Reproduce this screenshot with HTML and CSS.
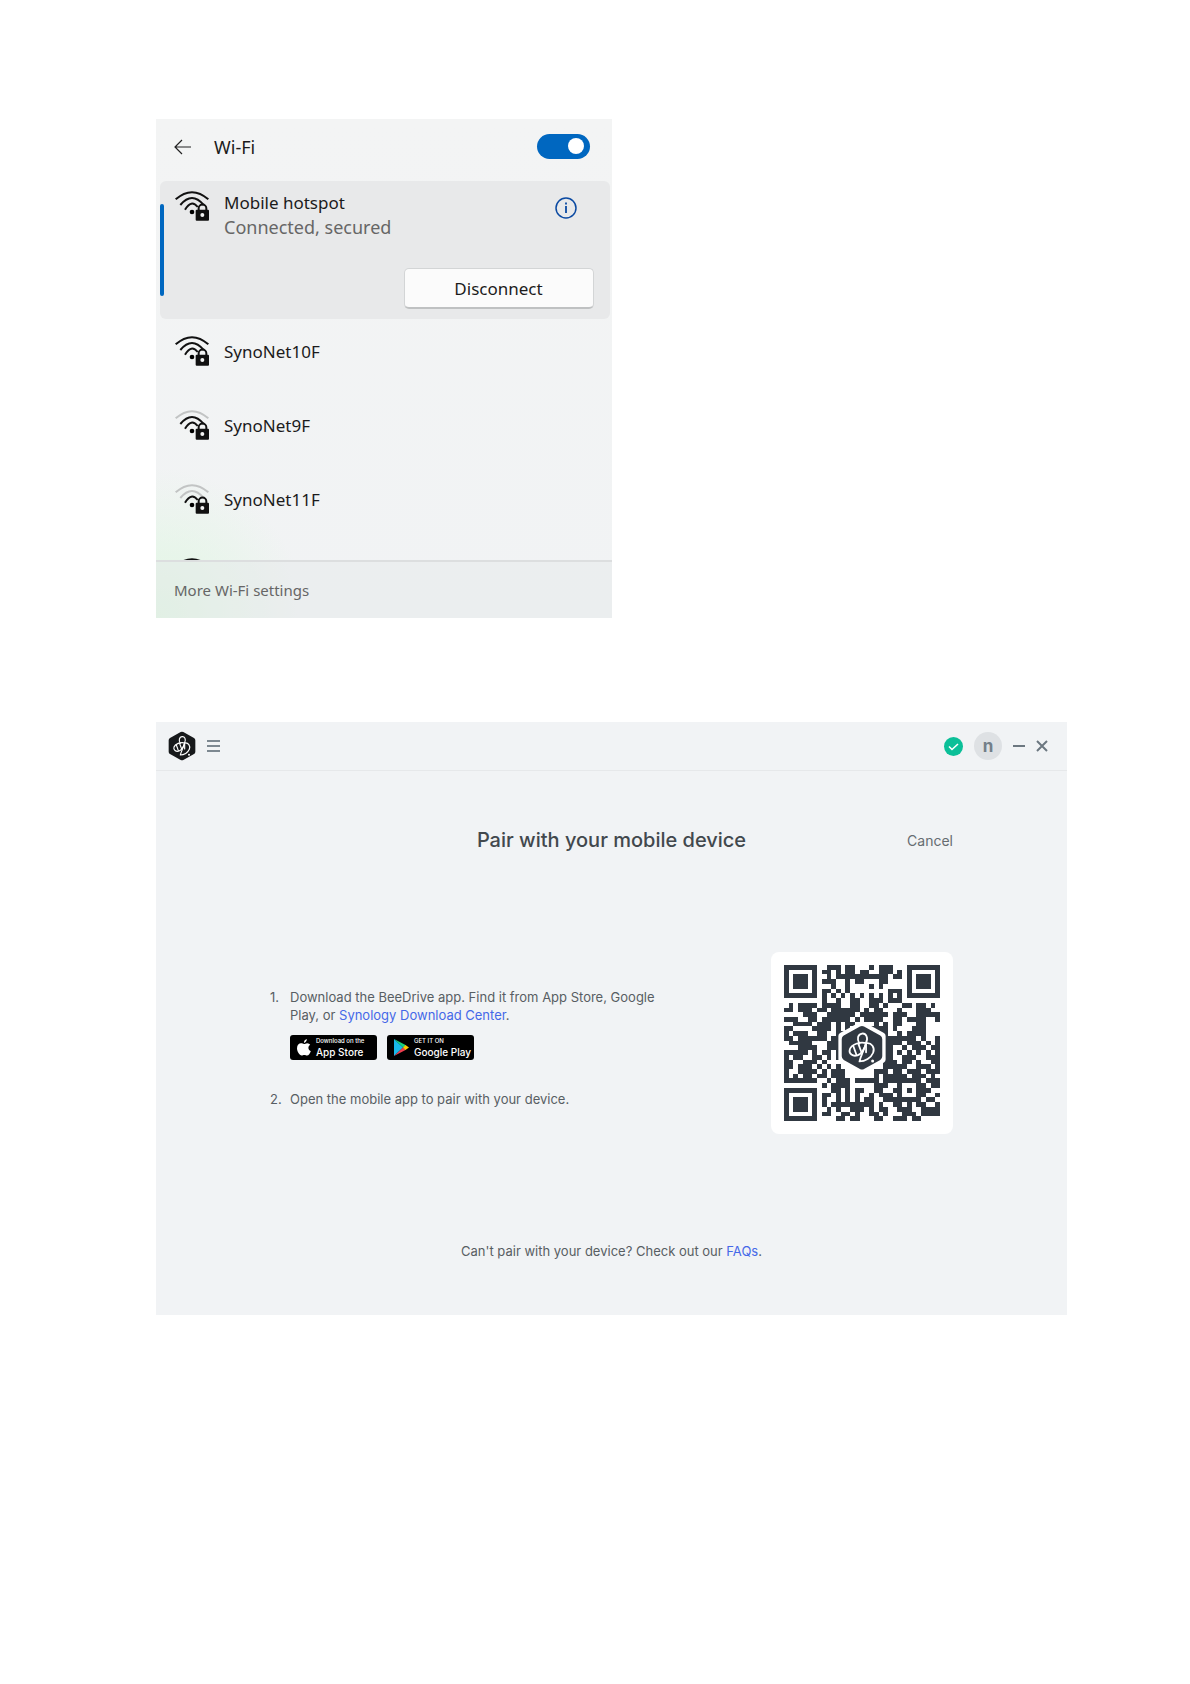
FILE: index.html
```
<!DOCTYPE html>
<html lang="en">
<head>
    <meta charset="UTF-8">
    <meta name="viewport" content="width=device-width, initial-scale=1.0">
    <title>Pair with your mobile device</title>
    <link rel="stylesheet" href="styles.css">
</head>
<body>
    <svg class="defs" aria-hidden="true">
        <symbol id="lock" viewBox="0 0 102 90">
            <path d="M71 58V52a11.500 11.500 0 0 1 23 0v6" fill="none" stroke="#111" stroke-width="6"/>
            <rect x="62" y="56" width="40" height="33" rx="3" fill="#111"/>
            <circle cx="82" cy="72" r="6" fill="#f3f4f4"/>
        </symbol>
        <symbol id="bee" viewBox="0 0 84 90">
            <path d="M38 3Q42 1 46 3L78 21Q82 23 82 28V62Q82 67 78 69L46 87Q42 89 38 87L6 69Q2 67 2 62V28Q2 23 6 21Z" fill="currentColor"/>
            <g fill="none" stroke="#fff" stroke-width="3.500" stroke-linecap="round" stroke-linejoin="round">
                <path d="M37 37C31 28 34 18 42 17S55 25 50 35V54"/>
                <path d="M50 36C38 32 21 39 18 48S24 63 33 60 46 50 50 36Z"/>
                <path d="M50 36C61 34 68 45 64 55S48 72 37 72C40 60 46 50 50 36Z"/>
                <path d="M25 42 31 59M35 38 41 54"/>
            </g>
            <circle cx="63" cy="71" r="3" fill="#fff"/>
        </symbol>
    </svg>

    <main class="page">
        <section class="wifi">
            <header class="wifi-header">
                <button class="icon-btn" aria-label="Back">
                    <svg width="17" height="16" viewBox="0 0 17 16"><path d="M17 8H1M8 1 1 8l7 7" fill="none" stroke="#222" stroke-width="1.200"/></svg>
                </button>
                <label for="wifi-toggle">Wi-Fi</label>
                <input type="checkbox" class="toggle" id="wifi-toggle" checked>
            </header>

            <ul class="networks">
                <li class="network active">
                    <svg class="wifi-icon" viewBox="0 0 102 90"><g class="waves"><path d="M2 25Q51-18 100 25"/><path d="M16 42Q51 0 86 42"/><path d="M30 56Q49 24 68 48"/></g><circle cx="51" cy="63" r="7"/><use href="#lock"/></svg>
                    <div class="network-text">
                        <div>Mobile hotspot</div>
                        <div class="status">Connected, secured</div>
                    </div>
                    <button class="icon-btn info" aria-label="Properties">
                        <svg width="22" height="22" viewBox="0 0 22 22"><circle cx="11" cy="11" r="10" fill="none" stroke="#0b4aa2" stroke-width="1.500"/><path d="M11 9v7M11 5.500v2" stroke="#0b4aa2" stroke-width="1.800"/></svg>
                    </button>
                    <button class="disconnect">Disconnect</button>
                </li>
                <li class="network">
                    <svg class="wifi-icon" viewBox="0 0 102 90"><g class="waves"><path d="M2 25Q51-18 100 25"/><path d="M16 42Q51 0 86 42"/><path d="M30 56Q49 24 68 48"/></g><circle cx="51" cy="63" r="7"/><use href="#lock"/></svg>
                    <span>SynoNet10F</span>
                </li>
                <li class="network">
                    <svg class="wifi-icon" viewBox="0 0 102 90"><g class="waves"><path class="weak" d="M2 25Q51-18 100 25"/><path d="M16 42Q51 0 86 42"/><path d="M30 56Q49 24 68 48"/></g><circle cx="51" cy="63" r="7"/><use href="#lock"/></svg>
                    <span>SynoNet9F</span>
                </li>
                <li class="network">
                    <svg class="wifi-icon" viewBox="0 0 102 90"><g class="waves"><path class="weak" d="M2 25Q51-18 100 25"/><path class="weak" d="M16 42Q51 0 86 42"/><path d="M30 56Q49 24 68 48"/></g><circle cx="51" cy="63" r="7"/><use href="#lock"/></svg>
                    <span>SynoNet11F</span>
                </li>
                <li class="network">
                    <svg class="wifi-icon" viewBox="0 0 102 90"><g class="waves"><path d="M2 25Q51-18 100 25"/></g></svg>
                </li>
            </ul>

            <footer class="wifi-footer"><a href="#">More Wi-Fi settings</a></footer>
        </section>

        <section class="window">
            <header class="titlebar">
                <svg class="logo" width="28" height="30" viewBox="0 0 84 90"><use href="#bee"/></svg>
                <button class="icon-btn" aria-label="Menu">
                    <svg width="13" height="12" viewBox="0 0 13 12"><path d="M0 1h13M0 6h13M0 11h13" stroke="#7d8891" stroke-width="2"/></svg>
                </button>
                <div class="titlebar-right">
                    <svg width="19" height="19" viewBox="0 0 19 19"><circle cx="9.500" cy="9.500" r="9.500" fill="#0bbf98"/><path d="m5 9.500 3 3 6-5.500" fill="none" stroke="#fff" stroke-width="1.600"/></svg>
                    <span class="avatar">n</span>
                    <button class="icon-btn" aria-label="Minimize">
                        <svg width="12" height="12" viewBox="0 0 12 12"><path d="M0 6h12" stroke="#6c7780" stroke-width="2"/></svg>
                    </button>
                    <button class="icon-btn" aria-label="Close">
                        <svg width="12" height="12" viewBox="0 0 12 12"><path d="m1 1 10 10M11 1 1 11" stroke="#6c7780" stroke-width="2"/></svg>
                    </button>
                </div>
            </header>

            <div class="content">
                <div class="heading">
                    <h1>Pair with your mobile device</h1>
                    <button class="cancel">Cancel</button>
                </div>

                <div class="pair">
                    <ol class="steps">
                        <li>
                            Download the BeeDrive app. Find it from App Store, Google Play, or <a href="#">Synology Download Center</a>.
                            <div class="stores">
                                <a class="store" href="#">
                                    <svg width="14" height="17" viewBox="0 0 14 17" fill="#fff"><path d="M9.800 0Q10 2.600 7 4 6.700 1.200 9.800 0ZM7 5C8 5 8.800 4.200 10.200 4.200 11.500 4.200 12.700 5 13.200 5.800 10.500 7.500 11 11 13.800 12.200 13 14.400 11.700 16.600 10 16.600 9 16.600 8.500 16 7.300 16S5.600 16.600 4.700 16.600C2.500 16.600 0 12.500 0 9.300 0 6 2 4.300 4 4.300 5.300 4.300 6.300 5 7 5Z"/></svg>
                                    <span class="store-text"><small>Download on the</small><span>App Store</span></span>
                                </a>
                                <a class="store" href="#">
                                    <svg width="15" height="17" viewBox="0 0 15 17"><path d="M0 0v17L9 8.500Z" fill="#18b8e8"/><path d="m0 0 12 6.200-3 2.300Z" fill="#18d180"/><path d="m0 17 12-6.200-3-2.300Z" fill="#ee3e4f"/><path d="m11.500 6 3.500 2.500-3.500 2.500L9 8.500Z" fill="#fdc900"/></svg>
                                    <span class="store-text"><small>GET IT ON</small><span>Google Play</span></span>
                                </a>
                            </div>
                        </li>
                        <li>Open the mobile app to pair with your device.</li>
                    </ol>
                    <div class="qr">
                        <svg viewBox="0 0 33 33" role="img" aria-label="Pairing code">
                            <path id="qr-modules" fill="#303841" shape-rendering="crispEdges"/>
                            <path d="M16.500 12.600 20.800 15v5L16.500 22.400 12.200 20v-5Z" fill="#fff" stroke="#fff" stroke-width="1.400" stroke-linejoin="round"/>
                            <use class="qr-logo" href="#bee" x="12" y="12.600" width="9" height="9.800"/>
                        </svg>
                    </div>
                </div>

                <p class="help">Can't pair with your device? Check out our <a href="#">FAQs</a>.</p>
            </div>
        </section>
    </main>
    <script src="script.js"></script>
</body>
</html>
```
FILE: styles.css
```
body {
    margin: 0;
    background-color: #fff;
    font-family: Inter, "Liberation Sans", sans-serif;
}

.defs {
    position: absolute;
    width: 0;
    height: 0;
}

button {
    font-family: inherit;
    cursor: pointer;
}

a {
    color: #4568e8;
    text-decoration: none;
}

.icon-btn {
    display: flex;
    padding: 0;
    border: none;
    background: none;
}

.page {
    display: flex;
    flex-direction: column;
    gap: 104px;
    padding: 119px 123px 119px 156px;
}

/* Wi-Fi panel */
.wifi {
    width: 50%;
    font-family: "Noto Sans", "Open Sans", sans-serif;
    font-size: 17px;
    color: #1b1b1b;
    background: radial-gradient(circle at 0 100%, #e0f7e2 0, rgba(224, 247, 226, 0) 150px), linear-gradient(#f3f4f4, #f1f3f4);
}

.wifi-header {
    display: flex;
    align-items: center;
    gap: 23px;
    height: 55px;
    padding: 0 22px 7px 18px;
    font-size: 18px;
}

.toggle {
    appearance: none;
    width: 53px;
    height: 25px;
    margin: 0 0 0 auto;
    padding: 4px 6px;
    box-sizing: border-box;
    border-radius: 13px;
    background-color: #0067c0;
}

.toggle::before {
    content: "";
    display: block;
    width: 16px;
    height: 16px;
    margin-left: auto;
    border-radius: 50%;
    background-color: #fff;
}

.networks {
    height: 379px;
    margin: 0;
    padding: 0;
    overflow: hidden;
    list-style: none;
}

.network {
    display: flex;
    align-items: flex-start;
    gap: 0 15px;
    height: 57px;
    padding: 17px 19px 0;
    line-height: 32px;
}

.network.active {
    flex-wrap: wrap;
    align-content: flex-start;
    position: relative;
    height: 128px;
    margin: 0 2px 0 4px;
    padding: 10px 15px 0;
    border-radius: 6px;
    background-color: #e8e9ea;
    line-height: 24px;
}

.network.active::before {
    content: "";
    position: absolute;
    left: 0;
    top: 23px;
    width: 4px;
    height: 92px;
    border-radius: 2px;
    background-color: #0067c0;
}

.wifi-icon {
    width: 34px;
    height: 30px;
}

.waves path {
    fill: none;
    stroke: #111;
    stroke-width: 6;
}

.waves .weak {
    stroke: #c2c4c4;
}

.network-text {
    flex: 1 0 200px;
}

.status {
    font-size: 18px;
    color: #666;
}

.info {
    margin: 6px 18px 0 0;
}

.disconnect {
    width: 190px;
    height: 41px;
    margin: 29px 1px 0 auto;
    border: 1px solid #d3d5d6;
    border-bottom: 2px solid #bfc1c2;
    border-radius: 5px;
    background-color: #fbfbfb;
    font-size: 17px;
    color: #1b1b1b;
}

.wifi-footer {
    display: flex;
    align-items: center;
    height: 56px;
    padding-left: 18px;
    border-top: 2px solid #dcdedf;
    background-color: rgba(228, 229, 232, 0.4);
}

.wifi-footer a {
    font-size: 15px;
    color: #666;
}

/* BeeDrive window */
.window {
    background-color: #f1f3f5;
    color: #585e63;
    font-size: 13px;
    line-height: 18px;
}

.titlebar {
    display: flex;
    align-items: center;
    gap: 11px;
    height: 49px;
    padding: 0 19px 0 12px;
    border-bottom: 1px solid #e6e8ea;
    box-sizing: border-box;
}

.logo {
    color: #17191b;
}

.titlebar-right {
    display: flex;
    align-items: center;
    gap: 11px;
    margin-left: auto;
}

.avatar {
    width: 28px;
    height: 28px;
    border-radius: 50%;
    background-color: #dee1e4;
    color: #737f89;
    font-size: 17px;
    font-weight: 700;
    line-height: 28px;
    text-align: center;
}

.content {
    padding: 54px 114px 55px;
}

.heading {
    display: grid;
    grid-template-columns: 1fr auto 1fr;
    align-items: center;
}

.heading h1 {
    grid-column: 2;
    margin: 0;
    font-size: 20px;
    font-weight: 500;
    line-height: 30px;
    color: #42484d;
}

.cancel {
    justify-self: end;
    padding: 0;
    border: none;
    background: none;
    color: #666c71;
    font-size: 14px;
}

.pair {
    display: flex;
    align-items: center;
    justify-content: space-between;
    margin-top: 97px;
}

.steps {
    width: 400px;
    margin: 0;
    padding: 10px 0 0;
    list-style: none;
    counter-reset: step;
}

.steps > li {
    display: block;
    position: relative;
    padding-left: 20px;
    counter-increment: step;
}

.steps > li::before {
    content: counter(step) ".";
    position: absolute;
    left: 0;
}

.steps > li + li {
    margin-top: 30px;
}

.stores {
    display: flex;
    gap: 10px;
    margin-top: 11px;
}

.store {
    display: flex;
    align-items: center;
    gap: 5px;
    width: 87px;
    height: 25px;
    padding-left: 7px;
    box-sizing: border-box;
    border-radius: 3px;
    background-color: #000;
    color: #fff;
}

.store-text {
    display: flex;
    flex-direction: column;
    font-size: 10px;
    font-weight: 500;
    line-height: 14px;
    white-space: nowrap;
}

.store-text small {
    font-size: 6px;
    line-height: 8px;
}

.qr {
    width: 156px;
    height: 156px;
    padding: 13px;
    border-radius: 8px;
    background-color: #fff;
}

.qr-logo {
    color: #303841;
}

.help {
    margin: 108px 0 0;
    text-align: center;
}
```
FILE: script.js
```
// one string per row of the pairing code
const rows = [
    "111111100111011000101110001111111",
    "100000101101011011001110101000001",
    "101110100101111111111101101011101",
    "101110101110010110001100001011101",
    "101110100010010000101000001011101",
    "100000101101010000000011101000001",
    "111111101010101010101010101111111",
    "000000001001001100111011100000000",
    "010111101111001100110100011011010",
    "110111011011111101011000100011100",
    "000011100111111011111101110011111",
    "111001101111110101111001101111001",
    "001111011101011010010101100011000",
    "110000111101010001111101000111000",
    "101110011001100000011100101111000",
    "110111111011000000000111111101001",
    "011111000111000000000111101110101",
    "000111100111000000000110010111011",
    "111110101101000000000110101010101",
    "101100110101000000000110011100111",
    "110011101000000000000111011010011",
    "110111010101000000000111110011101",
    "100111101011100000011101101110111",
    "101011011011100000010111110111010",
    "111111100101110111110111111110111",
    "000000001011110000011100100011011",
    "111111100011010110011001101011100",
    "100000101101010100101110100011001",
    "101110101001010101100111111110110",
    "101110101011111111101001101011001",
    "101110100101001110101100111001111",
    "100000101100110100110100011101111",
    "111111100001101100011001110110000"
];
document.getElementById("qr-modules").setAttribute("d", rows.map((row, y) =>
    [...row].map((cell, x) => cell === "1" ? `M${x} ${y}h1v1h-1z` : "").join("")
).join(""));
```
